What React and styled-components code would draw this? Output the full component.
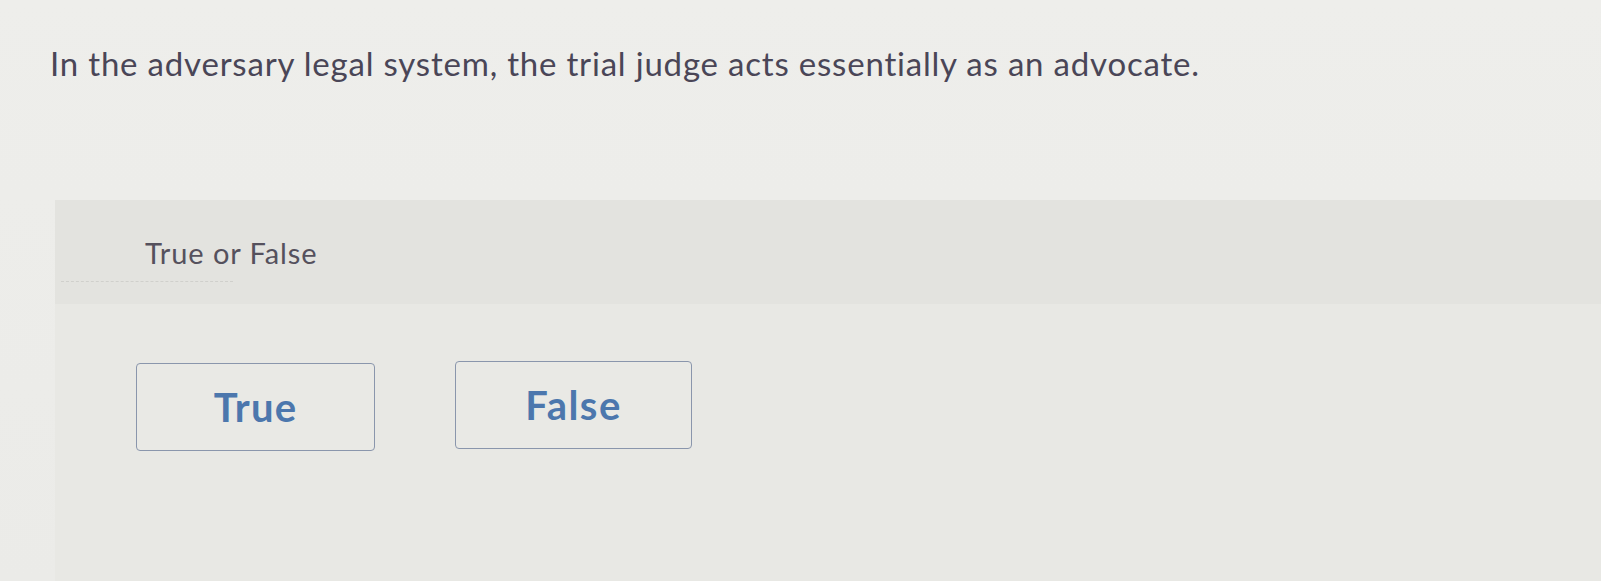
import React from "react";
import styled, { createGlobalStyle } from "styled-components";

const Global = createGlobalStyle`
  html, body { margin: 0; padding: 0; }
  body {
    background: #ebebe7;
    font-family: Lato, "Noto Sans", "Liberation Sans", sans-serif;
    overflow: hidden;
  }
`;

const Page = styled.div`
  width: 1601px;
  height: 581px;
  display: flex;
  flex-direction: column;
  background: linear-gradient(180deg, #eeeeeb 0%, #ebebe8 100%);
`;

const Question = styled.h1`
  margin: 0;
  padding: 42px 0 0 50px;
  height: 200px;
  box-sizing: border-box;
  font-size: 33px;
  line-height: 42px;
  font-weight: 400;
  color: #4a4657;
  letter-spacing: 0.8px;
`;

const Panel = styled.section`
  margin-left: 55px;
  flex: 1;
  display: flex;
  flex-direction: column;
  background: #e8e8e4;
`;

const PanelHeader = styled.div`
  height: 104px;
  box-sizing: border-box;
  padding: 35px 0 0 90px;
  background: #e3e3df;
  position: relative;
`;

const Prompt = styled.div`
  font-size: 29px;
  line-height: 36px;
  letter-spacing: 0.9px;
  color: #55515d;
`;

const Smudge = styled.div`
  position: absolute;
  left: 6px;
  top: 81px;
  width: 172px;
  border-top: 1px dashed #d0d0cc;
`;

const Choices = styled.div`
  display: flex;
  gap: 80px;
  padding: 58px 0 0 81px;
`;

const Choice = styled.button`
  width: ${(p) => p.$w}px;
  height: 88px;
  margin-top: ${(p) => p.$dy || 0}px;
  box-sizing: border-box;
  border: 1.5px solid #8a96ac;
  border-radius: 4px;
  background: #e9e9e5;
  color: #4c77ad;
  font-family: Lato, "Noto Sans", sans-serif;
  font-weight: 700;
  font-size: 40px;
  letter-spacing: ${(p) => p.$ls}px;
  padding: 0;
  cursor: pointer;
`;

export default function App() {
  return (
    <Page>
      <Global />
      <Question>
        In the adversary legal system, the trial judge acts essentially as an advocate.
      </Question>
      <Panel>
        <PanelHeader>
          <Prompt>True or False</Prompt>
          <Smudge />
        </PanelHeader>
        <Choices>
          <Choice $w={239} $dy={1} $ls={1.2}>True</Choice>
          <Choice $w={237} $dy={-1} $ls={1.5}>False</Choice>
        </Choices>
      </Panel>
    </Page>
  );
}
